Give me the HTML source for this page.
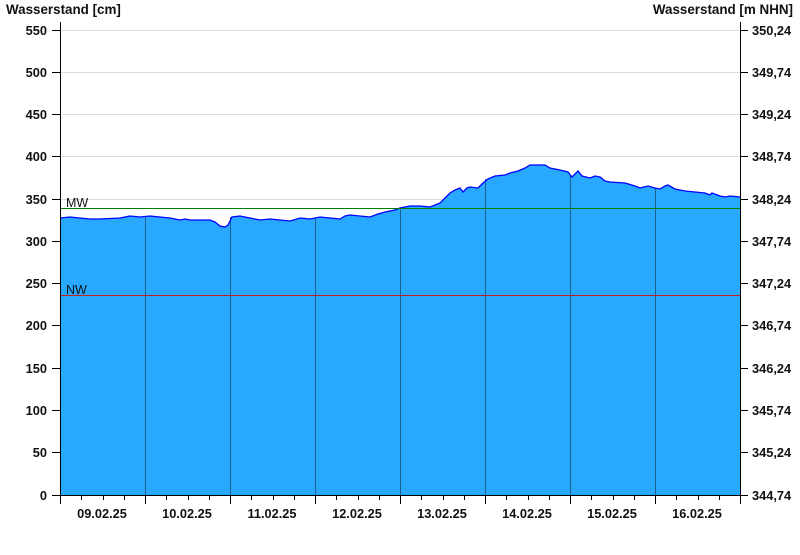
<!DOCTYPE html>
<html><head><style>
html,body{margin:0;padding:0;background:#fff;}
svg text{font-family:"Liberation Sans",Arial,sans-serif;font-weight:bold;font-size:12.8px;fill:#111;}
</style></head><body>
<svg width="800" height="550" viewBox="0 0 800 550" xmlns="http://www.w3.org/2000/svg">
<rect width="800" height="550" fill="#fff"/>
<text x="6" y="14" style="font-size:13.4px">Wasserstand [cm]</text>
<text x="793" y="14" text-anchor="end" style="font-size:13.4px">Wasserstand [m NHN]</text>
<g stroke="#ddd" stroke-width="1">
<line x1="61" x2="740" y1="30.5" y2="30.5"/>
<line x1="61" x2="740" y1="72.5" y2="72.5"/>
<line x1="61" x2="740" y1="114.5" y2="114.5"/>
<line x1="61" x2="740" y1="156.5" y2="156.5"/>
<line x1="61" x2="740" y1="199.5" y2="199.5"/>
<line x1="61" x2="740" y1="241.5" y2="241.5"/>
<line x1="61" x2="740" y1="283.5" y2="283.5"/>
<line x1="61" x2="740" y1="325.5" y2="325.5"/>
<line x1="61" x2="740" y1="368.5" y2="368.5"/>
<line x1="61" x2="740" y1="410.5" y2="410.5"/>
<line x1="61" x2="740" y1="452.5" y2="452.5"/>
</g>
<polygon fill="#29a8ff" points="60,495 60,218 70,217 80,218 90,219 100,219 120,218 130,216 140,217 150,216 160,217 170,218 180,220 185,219 190,220 200,220 210,220 215,222 220,226 225,227 228,225 232,217 240,216 250,218 260,220 270,219 280,220 290,221 300,218 310,219 320,217 330,218 340,219 345,216 350,215 360,216 370,217 378,214 385,212 395,210 400,208 410,206 420,206 430,207 435,205 440,203 445,198 450,193 455,190 460,188 463,192 467,188 470,187 478,188 483,183 488,179 495,176 505,175 510,173 518,171 525,168 530,165 545,165 550,168 560,170 568,172 572,177 578,171 582,176 590,178 595,176 600,177 605,181 610,182 625,183 635,186 640,188 648,186 655,188 660,189 665,186 668,185 675,189 685,191 695,192 705,193 710,195 712,193 720,196 725,197 730,196 740,197 740,495"/>
<g stroke="#1d5f8f" stroke-width="1">
<line x1="145.5" x2="145.5" y1="216" y2="495"/>
<line x1="230.5" x2="230.5" y1="217" y2="495"/>
<line x1="315.5" x2="315.5" y1="218" y2="495"/>
<line x1="400.5" x2="400.5" y1="208" y2="495"/>
<line x1="485.5" x2="485.5" y1="179" y2="495"/>
<line x1="570.5" x2="570.5" y1="175" y2="495"/>
<line x1="655.5" x2="655.5" y1="188" y2="495"/>
</g>
<polyline fill="none" stroke="#0000ff" stroke-width="1.3" points="60,218 70,217 80,218 90,219 100,219 120,218 130,216 140,217 150,216 160,217 170,218 180,220 185,219 190,220 200,220 210,220 215,222 220,226 225,227 228,225 232,217 240,216 250,218 260,220 270,219 280,220 290,221 300,218 310,219 320,217 330,218 340,219 345,216 350,215 360,216 370,217 378,214 385,212 395,210 400,208 410,206 420,206 430,207 435,205 440,203 445,198 450,193 455,190 460,188 463,192 467,188 470,187 478,188 483,183 488,179 495,176 505,175 510,173 518,171 525,168 530,165 545,165 550,168 560,170 568,172 572,177 578,171 582,176 590,178 595,176 600,177 605,181 610,182 625,183 635,186 640,188 648,186 655,188 660,189 665,186 668,185 675,189 685,191 695,192 705,193 710,195 712,193 720,196 725,197 730,196 740,197"/>
<line x1="61" x2="740" y1="208.5" y2="208.5" stroke="#008000" stroke-width="1"/>
<line x1="61" x2="740" y1="295.5" y2="295.5" stroke="#c02020" stroke-width="1"/>
<text x="66" y="207" style="font-weight:normal;font-size:12.5px">MW</text>
<text x="66" y="294" style="font-weight:normal;font-size:12.5px">NW</text>
<g stroke="#000" stroke-width="1">
<line x1="60.5" x2="60.5" y1="22" y2="495"/>
<line x1="740.5" x2="740.5" y1="22" y2="495"/>
<line x1="60" x2="741" y1="495.5" y2="495.5"/>
<line x1="52" x2="60" y1="30.5" y2="30.5"/><line x1="52" x2="60" y1="72.5" y2="72.5"/><line x1="52" x2="60" y1="114.5" y2="114.5"/><line x1="52" x2="60" y1="156.5" y2="156.5"/><line x1="52" x2="60" y1="199.5" y2="199.5"/><line x1="52" x2="60" y1="241.5" y2="241.5"/><line x1="52" x2="60" y1="283.5" y2="283.5"/><line x1="52" x2="60" y1="325.5" y2="325.5"/><line x1="52" x2="60" y1="368.5" y2="368.5"/><line x1="52" x2="60" y1="410.5" y2="410.5"/><line x1="52" x2="60" y1="452.5" y2="452.5"/><line x1="52" x2="60" y1="495.5" y2="495.5"/>
<line x1="741" x2="748" y1="30.5" y2="30.5"/><line x1="741" x2="748" y1="72.5" y2="72.5"/><line x1="741" x2="748" y1="114.5" y2="114.5"/><line x1="741" x2="748" y1="156.5" y2="156.5"/><line x1="741" x2="748" y1="199.5" y2="199.5"/><line x1="741" x2="748" y1="241.5" y2="241.5"/><line x1="741" x2="748" y1="283.5" y2="283.5"/><line x1="741" x2="748" y1="325.5" y2="325.5"/><line x1="741" x2="748" y1="368.5" y2="368.5"/><line x1="741" x2="748" y1="410.5" y2="410.5"/><line x1="741" x2="748" y1="452.5" y2="452.5"/><line x1="741" x2="748" y1="495.5" y2="495.5"/>
<line x1="60.5" x2="60.5" y1="495" y2="504"/><line x1="145.5" x2="145.5" y1="495" y2="504"/><line x1="230.5" x2="230.5" y1="495" y2="504"/><line x1="315.5" x2="315.5" y1="495" y2="504"/><line x1="400.5" x2="400.5" y1="495" y2="504"/><line x1="485.5" x2="485.5" y1="495" y2="504"/><line x1="570.5" x2="570.5" y1="495" y2="504"/><line x1="655.5" x2="655.5" y1="495" y2="504"/><line x1="740.5" x2="740.5" y1="495" y2="504"/>
<line x1="81.5" x2="81.5" y1="495" y2="500"/><line x1="103.5" x2="103.5" y1="495" y2="500"/><line x1="124.5" x2="124.5" y1="495" y2="500"/>
<line x1="166.5" x2="166.5" y1="495" y2="500"/><line x1="188.5" x2="188.5" y1="495" y2="500"/><line x1="209.5" x2="209.5" y1="495" y2="500"/>
<line x1="251.5" x2="251.5" y1="495" y2="500"/><line x1="273.5" x2="273.5" y1="495" y2="500"/><line x1="294.5" x2="294.5" y1="495" y2="500"/>
<line x1="336.5" x2="336.5" y1="495" y2="500"/><line x1="358.5" x2="358.5" y1="495" y2="500"/><line x1="379.5" x2="379.5" y1="495" y2="500"/>
<line x1="421.5" x2="421.5" y1="495" y2="500"/><line x1="443.5" x2="443.5" y1="495" y2="500"/><line x1="464.5" x2="464.5" y1="495" y2="500"/>
<line x1="506.5" x2="506.5" y1="495" y2="500"/><line x1="528.5" x2="528.5" y1="495" y2="500"/><line x1="549.5" x2="549.5" y1="495" y2="500"/>
<line x1="591.5" x2="591.5" y1="495" y2="500"/><line x1="613.5" x2="613.5" y1="495" y2="500"/><line x1="634.5" x2="634.5" y1="495" y2="500"/>
<line x1="676.5" x2="676.5" y1="495" y2="500"/><line x1="698.5" x2="698.5" y1="495" y2="500"/><line x1="719.5" x2="719.5" y1="495" y2="500"/>
</g>
<g text-anchor="end">
<text x="47" y="35">550</text><text x="47" y="77">500</text><text x="47" y="119">450</text><text x="47" y="161">400</text><text x="47" y="204">350</text><text x="47" y="246">300</text><text x="47" y="288">250</text><text x="47" y="330">200</text><text x="47" y="373">150</text><text x="47" y="415">100</text><text x="47" y="457">50</text><text x="47" y="500">0</text>
</g>
<g>
<text x="752" y="35">350,24</text><text x="752" y="77">349,74</text><text x="752" y="119">349,24</text><text x="752" y="161">348,74</text><text x="752" y="204">348,24</text><text x="752" y="246">347,74</text><text x="752" y="288">347,24</text><text x="752" y="330">346,74</text><text x="752" y="373">346,24</text><text x="752" y="415">345,74</text><text x="752" y="457">345,24</text><text x="752" y="500">344,74</text>
</g>
<g text-anchor="middle">
<text x="102" y="518">09.02.25</text><text x="187" y="518">10.02.25</text><text x="272" y="518">11.02.25</text><text x="357" y="518">12.02.25</text><text x="442" y="518">13.02.25</text><text x="527" y="518">14.02.25</text><text x="612" y="518">15.02.25</text><text x="697" y="518">16.02.25</text>
</g>
</svg>
</body></html>
